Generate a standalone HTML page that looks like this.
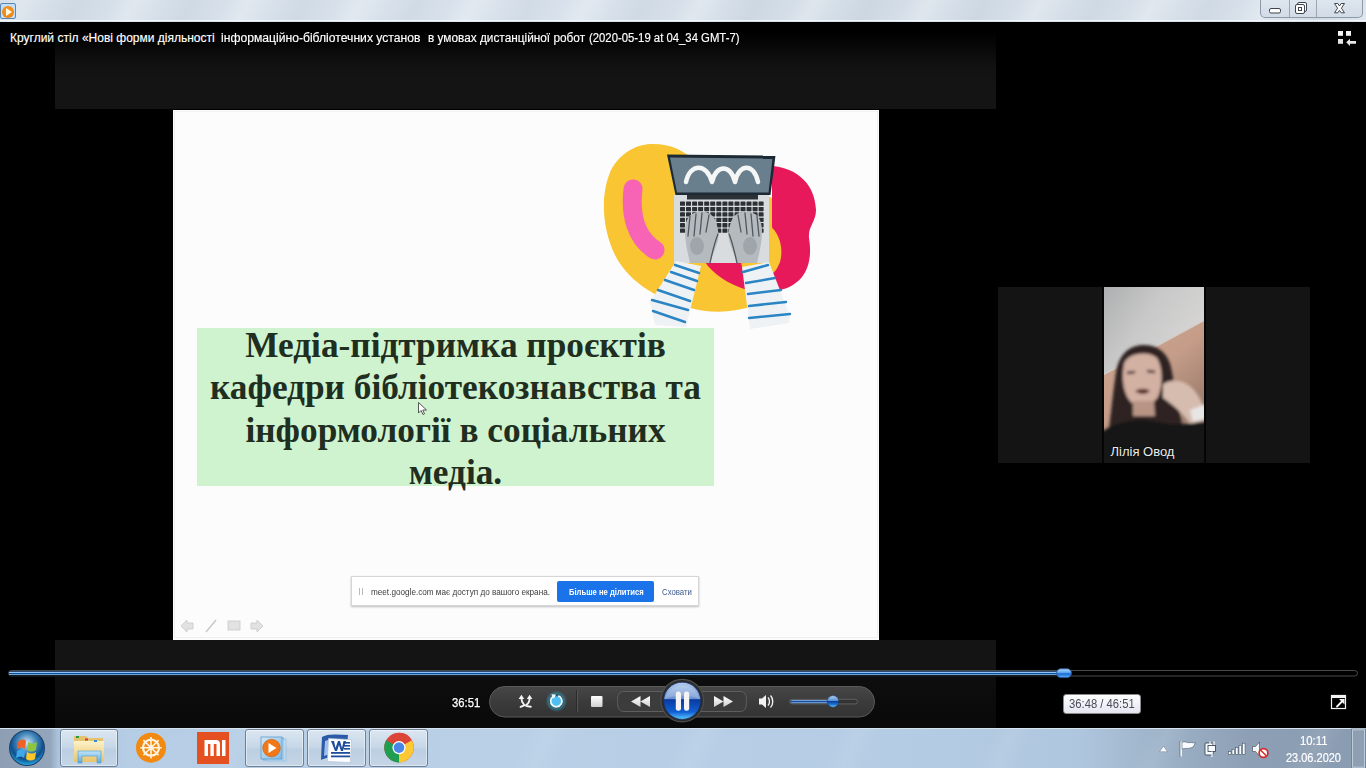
<!DOCTYPE html>
<html><head><meta charset="utf-8">
<style>
*{box-sizing:border-box;margin:0;padding:0}
html,body{width:1366px;height:768px;overflow:hidden;background:#000;font-family:"Liberation Sans",sans-serif}
.abs{position:absolute}
#titlebar{left:0;top:0;width:1366px;height:22px;background:repeating-linear-gradient(118deg,rgba(255,255,255,0) 0px,rgba(255,255,255,.25) 20px,rgba(255,255,255,0) 45px,rgba(120,140,160,.08) 70px,rgba(255,255,255,0) 100px),linear-gradient(90deg,#d5dfe9 0%,#d9e2ec 40%,#d3dde7 60%,#d9e2eb 100%)}
#titlebar:after{content:"";position:absolute;left:0;top:20px;width:1366px;height:1px;background:#f4f7fa}
#appicon{left:0;top:3px;width:16px;height:16px;border:1px solid #5a86b0;border-radius:2px;background:#bfe0f8}
#appicon i{position:absolute;left:1px;top:1.5px;width:12px;height:12px;border-radius:50%;background:radial-gradient(circle at 50% 40%,#ff9a20,#e87808)}
#appicon b{position:absolute;left:5px;top:3.5px;width:0;height:0;border-left:6px solid #fffbe8;border-top:4.5px solid transparent;border-bottom:4.5px solid transparent}
#capbtns{left:1260px;top:-2px;width:103px;height:20px;border:1px solid #8d99a6;border-top:none;border-radius:0 0 5px 5px;background:linear-gradient(#dfe7ef,#d2dce6)}
#capbtns .d{position:absolute;top:0;width:1px;height:19px;background:#9aa6b2}
#video{left:0;top:22px;width:1366px;height:706px;background:#000}
#vtop{left:55px;top:22px;width:941px;height:86.5px;background:linear-gradient(#000 0px,#000 10px,#050505 20px,#0c0c0c 32px,#121212 46px,#141414 62px,#141414 86px)}
#vbot{left:55px;top:640px;width:941px;height:88px;background:linear-gradient(#141414 0px,#141414 30px,#0e0e0e 36px,#0c0c0c 55px,#090909 88px)}
#slide{left:173px;top:110px;width:706px;height:530px;background:#fcfcfc}
#title{left:10px;top:31px;color:#fff;font-size:12px;white-space:pre;line-height:14px;-webkit-text-stroke:0.15px #fff}
#title span{position:absolute;top:0;transform-origin:0 0}
#webcam{left:998px;top:287px;width:312px;height:176px;background:#141414}
#cam{left:1104px;top:287px;width:100px;height:176px;background:#888}
#taskbar{left:0;top:728px;width:1366px;height:40px;background:linear-gradient(90deg,#8e9fb3 0px,#93a5ba 50px,#aac3dc 58px,#b5cde5 130px,#b9d0e7 500px,#b4cce4 900px,#aec6de 1080px,#9db2c8 1160px,#8d9fb4 1250px,#8a9cb1 1366px)}
#taskbar:before{content:"";position:absolute;left:0;top:0;width:1366px;height:1px;background:#d6e2ee}
#taskbar:after{content:"";position:absolute;left:0;top:0;width:1366px;height:40px;background:repeating-linear-gradient(115deg,rgba(255,255,255,0) 0px,rgba(255,255,255,0) 60px,rgba(255,255,255,.08) 80px,rgba(255,255,255,0) 100px,rgba(255,255,255,0) 140px)}
.tbtn{position:absolute;top:729px;height:38px;border:1px solid #6f8096;border-radius:3px;background:linear-gradient(#dbe6f1,#c8d8e8 45%,#bccfe2 55%,#c4d5e6);box-shadow:inset 0 0 0 1px rgba(255,255,255,.45)}
#green{left:197px;top:328px;width:517px;height:158px;background:#cff3cf}
#stext{left:197px;top:328px;width:517px;text-align:center;font:bold 35.3px/42.4px "Liberation Serif",serif;color:#1f2e1f}
#meetbar{left:351px;top:576px;width:348px;height:30px;background:#fff;border:1px solid #d6d6d6;box-shadow:0 1px 2px rgba(0,0,0,.25)}
#meetbar .grip{position:absolute;left:7px;top:11px;width:4px;height:7px;border-left:1px solid #bbb;border-right:1px solid #bbb}
#meetbar .t{position:absolute;left:18.5px;top:9px;font-size:9.5px;line-height:12px;color:#3c3c3c;white-space:nowrap;transform-origin:0 0;transform:scaleX(0.859)}
#meetbar .btn{position:absolute;left:205px;top:4px;width:97px;height:21px;background:#1a73e8;border-radius:2px}
#meetbar .bt{position:absolute;left:216.5px;top:9px;font-size:9px;line-height:12px;font-weight:bold;color:#fff;white-space:nowrap;transform-origin:0 0;transform:scaleX(0.85)}
#meetbar .hide{position:absolute;left:309.5px;top:9px;font-size:9.5px;line-height:12px;color:#3d5a8c;white-space:nowrap;transform-origin:0 0;transform:scaleX(0.82)}

.lbl{position:absolute;white-space:nowrap;transform-origin:0 0}
#ttip{left:1063px;top:694px;width:78px;height:20px;border:1px solid #8a8a8a;border-radius:3px;background:linear-gradient(#ffffff,#e4e5f0)}
</style></head><body>
<div id="titlebar" class="abs"></div>
<div id="appicon" class="abs"><i></i><b></b></div>
<div id="capbtns" class="abs"><div class="d" style="left:28px"></div><div class="d" style="left:55px"></div></div>
<svg class="abs" style="left:1260px;top:0" width="106" height="22" viewBox="1260 0 106 22">
<rect x="1269.5" y="8.5" width="11" height="4.5" rx="1.5" fill="#fff" stroke="#3f4650" stroke-width="1"/>
<rect x="1297.5" y="2.5" width="9" height="9" rx="1.5" fill="#fff" stroke="#3f4650" stroke-width="1"/>
<rect x="1295.5" y="4.5" width="9" height="9" rx="1.5" fill="#fff" stroke="#3f4650" stroke-width="1"/>
<rect x="1298.5" y="7.5" width="3" height="3" fill="#fff" stroke="#3f4650" stroke-width="1"/>
<path d="M1334.5,3.5 L1337.8,3.5 L1339.5,6 L1341.2,3.5 L1344.5,3.5 L1341.4,8.2 L1344.5,12.8 L1341.2,12.8 L1339.5,10.3 L1337.8,12.8 L1334.5,12.8 L1337.6,8.2 Z" fill="#fff" stroke="#3f4650" stroke-width="1" stroke-linejoin="round"/>
</svg>
<div id="vtop" class="abs"></div>
<div id="vbot" class="abs"></div>
<div id="slide" class="abs"></div>
<div class="abs" style="left:174px;top:111px;width:704px;height:527px;border:1px solid #efefef;border-top-color:#f3f3f3"></div>
<svg class="abs" style="left:590px;top:130px" width="240" height="210" viewBox="590 130 240 210">
<path d="M650,144 C668,143 684,150 694,160 L776,200 C792,240 792,285 762,302 C740,313 712,314 690,308 C662,300 630,285 615,255 C602,228 600,195 611,170 C621,152 636,145 650,144 Z" fill="#f9c532"/>
<path d="M772,166 C798,168 815,185 816,210 C816,222 808,226 809,238 C813,262 806,282 784,289 C776,291 772,285 772,280 L772,166 Z" fill="#e8195b"/>
<path d="M769,225 C779,232 784,248 780,262 C777,270 773,274 769,276 Z" fill="#f9c532"/>
<path d="M705,262 L741,262 L747,290 C728,284 713,274 705,262 Z" fill="#e8195b"/>
<path d="M633,189 C630,215 636,238 655,250" stroke="#f763b5" stroke-width="19" stroke-linecap="round" fill="none"/>
<path d="M667,154.5 L775.5,155.5 L770.5,195 L675.5,195 Z" fill="#1c2a33"/>
<path d="M670,157.5 L772.5,158.5 L768.5,192.5 L677,192.5 Z" fill="#6a7f8e"/>
<path d="M686,182 C690,163 707,163 712,182 C716,164 731,164 735,182 C739,163 754,163 758,182" stroke="#f5f6f6" stroke-width="4.5" stroke-linecap="round" stroke-linejoin="round" fill="none"/>
<path d="M674,195 L769,195 L769,263 L674,263 Z" fill="#d8dcdf"/>
<rect x="687" y="195" width="71" height="4.5" fill="#2a3238"/>
<g fill="#2c3136">
<rect x="680.0" y="201.5" width="5" height="4.3" rx="0.6"/>
<rect x="686.0" y="201.5" width="5" height="4.3" rx="0.6"/>
<rect x="692.1" y="201.5" width="5" height="4.3" rx="0.6"/>
<rect x="698.1" y="201.5" width="5" height="4.3" rx="0.6"/>
<rect x="704.2" y="201.5" width="5" height="4.3" rx="0.6"/>
<rect x="710.2" y="201.5" width="5" height="4.3" rx="0.6"/>
<rect x="716.3" y="201.5" width="5" height="4.3" rx="0.6"/>
<rect x="722.4" y="201.5" width="5" height="4.3" rx="0.6"/>
<rect x="728.4" y="201.5" width="5" height="4.3" rx="0.6"/>
<rect x="734.5" y="201.5" width="5" height="4.3" rx="0.6"/>
<rect x="740.5" y="201.5" width="5" height="4.3" rx="0.6"/>
<rect x="746.5" y="201.5" width="5" height="4.3" rx="0.6"/>
<rect x="752.6" y="201.5" width="5" height="4.3" rx="0.6"/>
<rect x="758.6" y="201.5" width="5" height="4.3" rx="0.6"/>
<rect x="680.0" y="206.9" width="5" height="4.3" rx="0.6"/>
<rect x="686.0" y="206.9" width="5" height="4.3" rx="0.6"/>
<rect x="692.1" y="206.9" width="5" height="4.3" rx="0.6"/>
<rect x="698.1" y="206.9" width="5" height="4.3" rx="0.6"/>
<rect x="704.2" y="206.9" width="5" height="4.3" rx="0.6"/>
<rect x="710.2" y="206.9" width="5" height="4.3" rx="0.6"/>
<rect x="716.3" y="206.9" width="5" height="4.3" rx="0.6"/>
<rect x="722.4" y="206.9" width="5" height="4.3" rx="0.6"/>
<rect x="728.4" y="206.9" width="5" height="4.3" rx="0.6"/>
<rect x="734.5" y="206.9" width="5" height="4.3" rx="0.6"/>
<rect x="740.5" y="206.9" width="5" height="4.3" rx="0.6"/>
<rect x="746.5" y="206.9" width="5" height="4.3" rx="0.6"/>
<rect x="752.6" y="206.9" width="5" height="4.3" rx="0.6"/>
<rect x="758.6" y="206.9" width="5" height="4.3" rx="0.6"/>
<rect x="680.0" y="212.3" width="5" height="4.3" rx="0.6"/>
<rect x="686.0" y="212.3" width="5" height="4.3" rx="0.6"/>
<rect x="692.1" y="212.3" width="5" height="4.3" rx="0.6"/>
<rect x="698.1" y="212.3" width="5" height="4.3" rx="0.6"/>
<rect x="704.2" y="212.3" width="5" height="4.3" rx="0.6"/>
<rect x="710.2" y="212.3" width="5" height="4.3" rx="0.6"/>
<rect x="716.3" y="212.3" width="5" height="4.3" rx="0.6"/>
<rect x="722.4" y="212.3" width="5" height="4.3" rx="0.6"/>
<rect x="728.4" y="212.3" width="5" height="4.3" rx="0.6"/>
<rect x="734.5" y="212.3" width="5" height="4.3" rx="0.6"/>
<rect x="740.5" y="212.3" width="5" height="4.3" rx="0.6"/>
<rect x="746.5" y="212.3" width="5" height="4.3" rx="0.6"/>
<rect x="752.6" y="212.3" width="5" height="4.3" rx="0.6"/>
<rect x="758.6" y="212.3" width="5" height="4.3" rx="0.6"/>
<rect x="680.0" y="217.7" width="5" height="4.3" rx="0.6"/>
<rect x="686.0" y="217.7" width="5" height="4.3" rx="0.6"/>
<rect x="692.1" y="217.7" width="5" height="4.3" rx="0.6"/>
<rect x="698.1" y="217.7" width="5" height="4.3" rx="0.6"/>
<rect x="704.2" y="217.7" width="5" height="4.3" rx="0.6"/>
<rect x="710.2" y="217.7" width="5" height="4.3" rx="0.6"/>
<rect x="716.3" y="217.7" width="5" height="4.3" rx="0.6"/>
<rect x="722.4" y="217.7" width="5" height="4.3" rx="0.6"/>
<rect x="728.4" y="217.7" width="5" height="4.3" rx="0.6"/>
<rect x="734.5" y="217.7" width="5" height="4.3" rx="0.6"/>
<rect x="740.5" y="217.7" width="5" height="4.3" rx="0.6"/>
<rect x="746.5" y="217.7" width="5" height="4.3" rx="0.6"/>
<rect x="752.6" y="217.7" width="5" height="4.3" rx="0.6"/>
<rect x="758.6" y="217.7" width="5" height="4.3" rx="0.6"/>
<rect x="680.0" y="223.1" width="5" height="4.3" rx="0.6"/>
<rect x="686.0" y="223.1" width="5" height="4.3" rx="0.6"/>
<rect x="692.1" y="223.1" width="5" height="4.3" rx="0.6"/>
<rect x="698.1" y="223.1" width="5" height="4.3" rx="0.6"/>
<rect x="704.2" y="223.1" width="5" height="4.3" rx="0.6"/>
<rect x="710.2" y="223.1" width="5" height="4.3" rx="0.6"/>
<rect x="716.3" y="223.1" width="5" height="4.3" rx="0.6"/>
<rect x="722.4" y="223.1" width="5" height="4.3" rx="0.6"/>
<rect x="728.4" y="223.1" width="5" height="4.3" rx="0.6"/>
<rect x="734.5" y="223.1" width="5" height="4.3" rx="0.6"/>
<rect x="740.5" y="223.1" width="5" height="4.3" rx="0.6"/>
<rect x="746.5" y="223.1" width="5" height="4.3" rx="0.6"/>
<rect x="752.6" y="223.1" width="5" height="4.3" rx="0.6"/>
<rect x="758.6" y="223.1" width="5" height="4.3" rx="0.6"/>
<rect x="680.0" y="228.5" width="5" height="4.3" rx="0.6"/>
<rect x="686.0" y="228.5" width="5" height="4.3" rx="0.6"/>
<rect x="692.1" y="228.5" width="5" height="4.3" rx="0.6"/>
<rect x="698.1" y="228.5" width="5" height="4.3" rx="0.6"/>
<rect x="704.2" y="228.5" width="5" height="4.3" rx="0.6"/>
<rect x="710.2" y="228.5" width="5" height="4.3" rx="0.6"/>
<rect x="716.3" y="228.5" width="5" height="4.3" rx="0.6"/>
<rect x="722.4" y="228.5" width="5" height="4.3" rx="0.6"/>
<rect x="728.4" y="228.5" width="5" height="4.3" rx="0.6"/>
<rect x="734.5" y="228.5" width="5" height="4.3" rx="0.6"/>
<rect x="740.5" y="228.5" width="5" height="4.3" rx="0.6"/>
<rect x="746.5" y="228.5" width="5" height="4.3" rx="0.6"/>
<rect x="752.6" y="228.5" width="5" height="4.3" rx="0.6"/>
<rect x="758.6" y="228.5" width="5" height="4.3" rx="0.6"/>
</g>
<path d="M685,232 C685,222 688,216 692,214 C696,212 700,211 705,212 C710,213 714,216 716,222 C718,228 719,234 718,240 C716,248 712,256 710,263 L690,263 C688,254 685,242 685,232 Z" fill="#b4babe"/>
<path d="M762,232 C762,222 759,216 755,214 C751,212 747,211 742,212 C737,213 733,216 731,222 C729,228 728,234 729,240 C731,248 735,256 737,263 L757,263 C759,254 762,242 762,232 Z" fill="#b4babe"/>
<g stroke="#50575d" stroke-width="1.3" fill="none" stroke-linecap="round">
<path d="M690,216 L688,236 M696,214 L694,236 M702,213 L700,234 M709,215 L706,232"/>
<path d="M718,234 C714,244 712,254 710,263"/>
<path d="M757,216 L759,236 M751,214 L753,236 M745,213 L747,234 M738,215 L741,232"/>
<path d="M729,234 C733,244 735,254 737,263"/>
</g>
<g fill="#8e959a" opacity="0.55">
<ellipse cx="697" cy="246" rx="7" ry="9"/><ellipse cx="750" cy="246" rx="7" ry="9"/>
</g>
<path d="M676,261 L701,266 L686,327 L655,325 L650,302 Z" fill="#eef2f5"/>
<path d="M742,267 L769,262 L790,316 L789,323 L750,329 Z" fill="#eef2f5"/>
<g stroke="#2b85c5" stroke-width="2.5" fill="none" stroke-linecap="round">
<path d="M675,265 L699,273 M671,272 L697,281 M665,280 L694,290 M658,290 L690,301 M652,300 L688,310 M653,311 L685,322"/>
<path d="M743,272 L768,265 M746,283 L775,278 M748,294 L781,290 M749,306 L786,302 M749,318 L790,314"/>
</g>
</svg>
<div id="green" class="abs"></div>
<div id="stext" class="abs" style="top:325px">Медіа-підтримка проєктів<br>кафедри бібліотекознавства та<br>інформології в соціальних<br>медіа.</div>
<div id="title" class="abs"><span style="left:0">Круглий стіл «Нові форми діяльності</span><span style="left:210.5px;transform:scaleX(1.012)">інформаційно-бібліотечних установ</span><span style="left:418px;transform:scaleX(0.985)">в умовах дистанційної робот</span><span style="left:579px;transform:scaleX(0.944)">(2020-05-19 at 04_34 GMT-7)</span></div>
<div id="meetbar" class="abs"><div class="grip"></div><div class="t">meet.google.com має доступ до вашого екрана.</div><div class="btn"></div><div class="bt">Більше не ділитися</div><div class="hide">Сховати</div></div>
<svg class="abs" style="left:175px;top:615px" width="95" height="22" viewBox="175 615 95 22">
<g fill="#e2e2e2" stroke="#c8c8c8" stroke-width="0.8">
<path d="M181,626 L187,620 L187,623 L193,623 L193,629 L187,629 L187,632 Z"/>
<path d="M206,632 L216,620" stroke-width="1.4"/>
<rect x="228" y="621" width="12" height="9"/>
<path d="M263,626 L257,620 L257,623 L251,623 L251,629 L257,629 L257,632 Z"/>
</g></svg>
<svg class="abs" style="left:416px;top:400px" width="14" height="18" viewBox="416 400 14 18">
<path d="M418.5,402.5 L418.5,413 L421,410.5 L423,414.5 L424.5,413.8 L422.8,410 L426.5,410 Z" fill="#fff" stroke="#444" stroke-width="0.9" stroke-linejoin="round"/>
</svg>
<div id="webcam" class="abs"></div>
<div class="abs" style="left:1102px;top:287px;width:2px;height:176px;background:#050505"></div>
<div class="abs" style="left:1204px;top:287px;width:2px;height:176px;background:#050505"></div>
<svg class="abs" style="left:1104px;top:287px" width="100" height="176" viewBox="1104 287 100 176">
<defs>
<linearGradient id="ceil" x1="0" y1="0" x2="0.5" y2="0.6"><stop offset="0" stop-color="#aeafb0"/><stop offset="0.5" stop-color="#c8c8c8"/><stop offset="1" stop-color="#d6d5d4"/></linearGradient>
<linearGradient id="wall" x1="0" y1="0" x2="0.6" y2="1"><stop offset="0" stop-color="#cfa893"/><stop offset="0.5" stop-color="#c49c88"/><stop offset="1" stop-color="#8e7264"/></linearGradient>
<filter id="bl" x="-20%" y="-20%" width="140%" height="140%"><feGaussianBlur stdDeviation="1.4"/></filter>
</defs>
<rect x="1104" y="287" width="100" height="176" fill="url(#ceil)"/>
<path d="M1104,375 L1204,321 L1204,463 L1104,463 Z" fill="url(#wall)"/>
<path d="M1104,374.5 L1204,320.5" stroke="#d2cbc4" stroke-width="1.2"/>
<g filter="url(#bl)">
<path d="M1142,345 C1160,344 1170,356 1172,372 C1176,395 1182,425 1190,463 L1104,463 L1106,452 C1110,425 1112,398 1116,372 C1119,355 1128,346 1142,345 Z" fill="#2e2220"/>
<path d="M1124,364 C1127,353 1148,350 1157,358 C1163,368 1163,385 1158,397 C1152,406 1140,408 1132,403 C1124,396 1121,380 1124,364 Z" fill="#d2b0a2"/>
<path d="M1133,401 L1154,401 L1155,416 L1133,416 Z" fill="#b89484"/>
<path d="M1163,384 C1172,378 1186,380 1194,390 C1202,400 1206,410 1206,422 L1190,424 C1182,412 1172,404 1163,398 Z" fill="#d6bcaf"/>
<path d="M1190,410 L1206,404 L1206,418 L1193,422 Z" fill="#e8e6e4"/>
<path d="M1098,434 C1118,420 1138,418 1158,422 C1176,426 1192,424 1210,420 L1210,470 L1098,470 Z" fill="#121212"/>
<path d="M1127,373 L1135,372 M1147,371 L1155,372" stroke="#3a2824" stroke-width="2.4" fill="none"/>
<path d="M1135,391 C1140,388 1146,388 1150,391 C1146,395 1140,395 1135,391 Z" fill="#5a2e2c"/>
</g>
</svg>
<svg class="abs" style="left:0;top:22px" width="1366" height="706" viewBox="0 22 1366 706">
<defs>
<linearGradient id="pillg" x1="0" y1="0" x2="0" y2="1"><stop offset="0" stop-color="#474747"/><stop offset="0.5" stop-color="#3b3b3b"/><stop offset="1" stop-color="#333"/></linearGradient>
<radialGradient id="playg" cx="0.5" cy="0.3" r="0.75"><stop offset="0" stop-color="#9ec8f4"/><stop offset="0.42" stop-color="#4d8fda"/><stop offset="0.5" stop-color="#0a45b0"/><stop offset="0.85" stop-color="#0b5fd6"/><stop offset="1" stop-color="#3aa0f5"/></radialGradient>
<linearGradient id="playg2" x1="0" y1="0" x2="0" y2="1"><stop offset="0" stop-color="#b4cdf0"/><stop offset="0.44" stop-color="#6b92d0"/><stop offset="0.47" stop-color="#0a3aa0"/><stop offset="0.8" stop-color="#1060d4"/><stop offset="1" stop-color="#5ccbff"/></linearGradient>
<linearGradient id="thumbg" x1="0" y1="0" x2="0" y2="1"><stop offset="0" stop-color="#b6dcff"/><stop offset="0.5" stop-color="#4b9cf0"/><stop offset="0.55" stop-color="#1766d0"/><stop offset="1" stop-color="#5fb2ff"/></linearGradient>
<linearGradient id="volthumb" x1="0" y1="0" x2="0" y2="1"><stop offset="0" stop-color="#b0d4f8"/><stop offset="0.42" stop-color="#6096d6"/><stop offset="0.5" stop-color="#0b3d9a"/><stop offset="0.8" stop-color="#1f80e0"/><stop offset="1" stop-color="#80d8ff"/></linearGradient>
<linearGradient id="stopg" x1="0" y1="0" x2="0" y2="1"><stop offset="0" stop-color="#ffffff"/><stop offset="1" stop-color="#cfcfcf"/></linearGradient>
<radialGradient id="glow" cx="0.5" cy="0.5" r="0.5"><stop offset="0.5" stop-color="#40b8d8" stop-opacity="0.85"/><stop offset="1" stop-color="#2a8aa8" stop-opacity="0"/></radialGradient>
</defs>
<!-- seek track -->
<rect x="8.5" y="670.5" width="1349" height="5.5" rx="2.75" fill="#000" stroke="#4a4a4a" stroke-width="1"/>
<rect x="9" y="671" width="1052" height="1" fill="#2c4a70"/>
<rect x="9" y="672" width="1052" height="1" fill="#8fc4f8"/>
<rect x="9" y="673" width="1052" height="1" fill="#0e4c98"/>
<rect x="9" y="674" width="1052" height="1" fill="#6ea4dc"/>
<rect x="9" y="675.5" width="1050" height="1.2" fill="#07101a"/>
<rect x="1056.5" y="668.8" width="15" height="8.8" rx="4.4" fill="url(#thumbg)" stroke="#2a5a9a" stroke-width="0.8"/>
<!-- pill -->
<rect x="489.5" y="686.5" width="385" height="30.5" rx="15.25" fill="url(#pillg)" stroke="#5a5a5a" stroke-width="1"/>
<!-- shuffle -->
<g stroke="#f4f4f4" stroke-width="1.9" fill="none" stroke-linecap="round">
<path d="M521.4,698 C521.4,703 525,706.6 530.8,706.8"/>
<path d="M529.6,698 C529.6,701 528.8,703.2 526.8,704.5"/>
<path d="M524.2,705.4 L520.6,706.8"/>
</g>
<path d="M518.6,699 L521.4,694.8 L524.2,699 Z M526.8,699 L529.6,694.8 L532.4,699 Z" fill="#f4f4f4"/>
<!-- repeat -->
<circle cx="556.3" cy="701.2" r="11" fill="url(#glow)"/>
<circle cx="556.3" cy="701.2" r="7.2" fill="#10303c" opacity="0.6"/>
<circle cx="556.3" cy="701.2" r="5" fill="#4ebff0"/>
<path d="M558.2,695.9 A5.6,5.6 0 1 1 553.1,696.6" stroke="#f2f8ff" stroke-width="1.8" fill="none"/>
<path d="M556,694.4 L551.3,694.3 L553.8,698.8 Z" fill="#f2f8ff"/>
<!-- separator -->
<line x1="576.5" y1="690" x2="576.5" y2="712" stroke="#2a2a2a" stroke-width="1"/>
<line x1="577.5" y1="690" x2="577.5" y2="712" stroke="#555" stroke-width="1"/>
<!-- stop -->
<rect x="591" y="696" width="11.5" height="11" rx="1" fill="url(#stopg)"/>
<!-- prev / next capsules -->
<path d="M670,691.5 L624,691.5 C619,691.5 617.5,695 617.5,701.5 C617.5,708 619,711.5 624,711.5 L670,711.5" fill="#3c3c3c" stroke="#5e5e5e" stroke-width="1"/>
<path d="M694,691.5 L740,691.5 C745,691.5 746.5,695 746.5,701.5 C746.5,708 745,711.5 740,711.5 L694,711.5" fill="#3c3c3c" stroke="#5e5e5e" stroke-width="1"/>
<path d="M631,701.5 L640.5,696 L640.5,707 Z M640.5,701.5 L650,696 L650,707 Z" fill="url(#stopg)"/>
<path d="M733,701.5 L723.5,696 L723.5,707 Z M723.5,701.5 L714,696 L714,707 Z" fill="url(#stopg)"/>
<!-- play -->
<circle cx="682.2" cy="700.6" r="21.3" fill="#2b2b2b" stroke="#4e4e4e" stroke-width="1.2"/>
<circle cx="682.2" cy="700.8" r="18.6" fill="url(#playg2)" stroke="#1b2f5a" stroke-width="0.8"/>
<path d="M664.5,699.5 C670,696.5 676,695.8 682.2,695.8 C688.4,695.8 694.4,696.5 699.9,699.5 A18.2,18.2 0 0 0 664.5,699.5 Z" fill="#ffffff" opacity="0.18"/>
<rect x="675.8" y="691.6" width="5.2" height="19.2" rx="2.4" fill="#f4f4f4"/>
<rect x="684" y="691.6" width="5.2" height="19.2" rx="2.4" fill="#f4f4f4"/>
<!-- volume icon -->
<path d="M759,698.5 L762,698.5 L766,695 L766,708 L762,704.5 L759,704.5 Z" fill="#f2f2f2"/>
<path d="M768,697.5 C770,699.5 770,703.5 768,705.5" stroke="#f2f2f2" stroke-width="1.4" fill="none"/>
<path d="M770.5,695.5 C773.5,698.5 773.5,704.5 770.5,707.5" stroke="#f2f2f2" stroke-width="1.4" fill="none"/>
<!-- volume track -->
<rect x="789.5" y="699.3" width="68" height="4.6" rx="2.3" fill="#333" stroke="#6a6a6a" stroke-width="0.8"/>
<rect x="790.5" y="700" width="42" height="3.2" rx="1.6" fill="#6d9fd8"/>
<rect x="790.5" y="701.2" width="42" height="0.9" fill="#0c3a8c"/>
<circle cx="833" cy="701.4" r="5.8" fill="url(#volthumb)" stroke="#223a66" stroke-width="0.6"/>
<!-- fullscreen -->
<rect x="1331.5" y="695.5" width="14" height="13" fill="none" stroke="#f4f4f4" stroke-width="1.2"/>
<rect x="1331" y="695" width="15" height="3" fill="#f4f4f4"/>
<path d="M1337,706.5 L1342,701.5" stroke="#f4f4f4" stroke-width="1.8" stroke-linecap="round"/>
<path d="M1339,699 L1344.5,699 L1344.5,704.5 Z" fill="#f4f4f4"/>
<!-- top-right compact icon -->
<rect x="1338" y="31" width="5" height="4.8" fill="#f4f4f4"/>
<rect x="1346" y="31" width="5" height="4.8" fill="#f4f4f4"/>
<rect x="1338" y="39" width="5" height="4.8" fill="#e4e4e4"/>
<path d="M1346.2,42.3 L1350,38.8 L1350,41 L1356,41 L1356,43.8 L1350,43.8 L1350,46 Z" fill="#e8e8e8"/>
</svg>
<div class="lbl" style="left:452px;top:695.5px;font-size:12.5px;color:#fff;transform:scaleX(0.9);-webkit-text-stroke:0.25px #fff">36:51</div>
<div id="ttip" class="abs"></div>
<div class="lbl" style="left:1068.5px;top:697px;font-size:12.5px;color:#4a4a58;transform:scaleX(0.9)">36:48 / 46:51</div>
<div class="lbl" style="left:1110.5px;top:443.5px;font-size:13px;color:#ececec;text-shadow:0 0 2px #000">Лілія Овод</div>
<div id="taskbar" class="abs"></div>
<div class="tbtn" style="left:60px;width:58px"></div>
<div class="tbtn" style="left:245px;width:59px"></div>
<div class="tbtn" style="left:307px;width:59px"></div>
<div class="tbtn" style="left:369px;width:59px"></div>
<svg class="abs" style="left:0;top:728px" width="1366" height="40" viewBox="0 728 1366 40">
<defs>
<radialGradient id="orb" cx="0.5" cy="0.35" r="0.65"><stop offset="0" stop-color="#cfe6f5"/><stop offset="0.45" stop-color="#3f83b8"/><stop offset="0.75" stop-color="#0d4f8c"/><stop offset="1" stop-color="#28a4e0"/></radialGradient>
<linearGradient id="wmpb" x1="0" y1="0" x2="1" y2="1"><stop offset="0" stop-color="#cfe8fa"/><stop offset="1" stop-color="#7fb9e6"/></linearGradient>
<linearGradient id="fold" x1="0" y1="0" x2="0" y2="1"><stop offset="0" stop-color="#fdf2c8"/><stop offset="1" stop-color="#e9c46d"/></linearGradient>
<linearGradient id="shelf" x1="0" y1="0" x2="0" y2="1"><stop offset="0" stop-color="#bfe4fa"/><stop offset="1" stop-color="#5aa9dc"/></linearGradient>
</defs>
<!-- start orb -->
<circle cx="27" cy="748" r="18" fill="#1b3f66"/>
<circle cx="27" cy="748" r="17" fill="url(#orb)"/>
<path d="M18,742 C21,739 24,739 26,741 L25,749 C23,747 20,747 17,749 Z" fill="#f0612a"/>
<path d="M28,742 C31,744 34,744 37,742 L36,750 C33,752 30,752 27,750 Z" fill="#8cc63f"/>
<path d="M17,751 C20,749 23,749 25,751 L24,758 C22,756 19,756 16,758 Z" fill="#3ea8ea"/>
<path d="M27,752 C30,754 33,754 36,752 L35,759 C32,761 29,761 26,759 Z" fill="#fcc72a"/>
<!-- explorer folder -->
<path d="M74,736 L86,736 L88,738 L103,738 L104,762 L74,762 Z" fill="#e4c270"/>
<path d="M74,741 L104,741 L104,762 L74,762 Z" fill="url(#fold)"/>
<rect x="76" y="736" width="3" height="2" fill="#2a9a3a"/><rect x="85" y="738.5" width="3" height="2" fill="#c8402a"/><rect x="94" y="740" width="3" height="2" fill="#3a8ad0"/>
<path d="M78,751 L101,751 L101,763 L97,763 L97,756 L82,756 L82,763 L78,763 Z" fill="url(#shelf)" stroke="#4c9bd0" stroke-width="0.6"/>
<!-- orange wheel -->
<circle cx="151" cy="747.7" r="15" fill="#f28a12"/>
<g stroke="#fff3e0" fill="none">
<circle cx="151" cy="747.7" r="8" stroke-width="2.2"/>
<path d="M151,737 L151,758.4 M140.3,747.7 L161.7,747.7 M143.4,740.1 L158.6,755.3 M158.6,740.1 L143.4,755.3" stroke-width="1.6"/>
</g>
<circle cx="151" cy="747.7" r="2.5" fill="#fff3e0"/>
<!-- mi -->
<rect x="197" y="732" width="32" height="32" fill="#e4501f"/>
<path d="M204.5,740 L216,740 C219,740 220,741.5 220,744.5 L220,756 L216.5,756 L216.5,744 L213.8,744 L213.8,756 L210.4,756 L210.4,744 L208,744 L208,756 L204.5,756 Z M222,740 L225.5,740 L225.5,756 L222,756 Z" fill="#fff"/>
<!-- wmp -->
<rect x="263.5" y="738" width="20" height="22" fill="#a9d4f2" stroke="#6ea7d3" stroke-width="0.8"/>
<rect x="266" y="739" width="20" height="22" fill="#b8dcf5" stroke="#7ab0d8" stroke-width="0.6" opacity="0.7"/>
<rect x="261" y="737" width="21" height="22" fill="url(#wmpb)" stroke="#5d9bcb" stroke-width="0.8"/>
<circle cx="271.5" cy="748" r="8.8" fill="#f07818" stroke="#d45a08" stroke-width="0.6"/>
<path d="M268.5,743 L276.5,748 L268.5,753 Z" fill="#fff"/>
<!-- word -->
<path d="M322,737 C326,734 336,734 348,735 L346,757 C336,756 326,757 321,760 Z" fill="#2a5aa8"/>
<path d="M325,741 C329,739 336,739 344,739.5 L343,754 C336,753.5 329,754 324,756 Z" fill="#9fc0ea"/>
<rect x="328" y="739" width="23" height="23" fill="#fbfdff" stroke="#b9c6d8" stroke-width="0.7" transform="rotate(3 339 750)"/>
<path d="M331,741 L334,741 L335.5,748 L338,741 L340,741 L342,748 L343.5,741 L346,741 L343,751 L341,751 L339,745 L337,751 L335,751 Z" fill="#1e4c9c"/>
<rect x="344" y="742" width="6" height="1.6" fill="#1e4c9c"/><rect x="344" y="745" width="6" height="1.6" fill="#1e4c9c"/><rect x="344" y="748" width="6" height="1.6" fill="#1e4c9c"/>
<rect x="331" y="752" width="19" height="1.8" fill="#1e4c9c"/><rect x="331" y="755.5" width="19" height="1.8" fill="#1e4c9c"/>
<!-- chrome -->
<circle cx="399" cy="747.6" r="14.8" fill="#db4437"/>
<path d="M399,747.6 L399,732.8 A14.8,14.8 0 0 1 411.8,740.2 Z" fill="#db4437"/>
<path d="M399,747.6 L411.8,740.2 A14.8,14.8 0 0 1 399,762.4 Z" fill="#fcc934"/>
<path d="M399,747.6 L399,762.4 A14.8,14.8 0 0 1 386.2,740.2 Z" fill="#1e9e50"/>
<circle cx="399" cy="747.6" r="6.6" fill="#fff"/>
<circle cx="399" cy="747.6" r="5.3" fill="#4a86e8"/>
<!-- tray -->
<path d="M1159.5,751.7 L1163.5,746.2 L1167.5,751.7 Z" fill="#f8fbff" stroke="#5a6a7a" stroke-width="0.4"/>
<path d="M1181,741.5 L1181,756.5" stroke="#f8fbff" stroke-width="1.8"/>
<path d="M1182,742 C1185,741 1188,743.5 1190.5,742.5 L1195.5,743 L1193,747 C1190,749 1186,748 1182,749 Z" fill="#f8fbff" stroke="#3a4654" stroke-width="0.5"/>
<path d="M1180,741 L1180,757" stroke="#3a4654" stroke-width="0.5"/>
<rect x="1205" y="743" width="8" height="12" rx="1" fill="#f8fbff" stroke="#2e3a48" stroke-width="0.8"/>
<rect x="1208" y="745.5" width="7.5" height="6" fill="#f8fbff" stroke="#2e3a48" stroke-width="0.8"/>
<path d="M1210,741.5 L1210,745 M1214,741.5 L1214,745 M1212,751.5 L1212,757" stroke="#f8fbff" stroke-width="1.2"/>
<g fill="#f8fbff" stroke="#3a4654" stroke-width="0.5">
<rect x="1228.5" y="751.5" width="2.5" height="2.8"/><rect x="1232" y="749.5" width="2.5" height="4.8"/><rect x="1235.5" y="747.5" width="2.5" height="6.8"/><rect x="1239" y="745.3" width="2.5" height="9"/><rect x="1242.5" y="743.2" width="2.5" height="11.1"/>
</g>
<path d="M1252.5,746.5 L1255.5,746.5 L1259.5,742 L1259.5,756 L1255.5,751.5 L1252.5,751.5 Z" fill="#f4f6f8" stroke="#3a4654" stroke-width="0.6"/>
<circle cx="1263.5" cy="753" r="4.4" fill="#fff" stroke="#d42a2a" stroke-width="1.7"/>
<path d="M1260.5,750 L1266.5,756" stroke="#d42a2a" stroke-width="1.5"/>
<!-- show desktop -->
<rect x="1351.5" y="729" width="14" height="39" fill="#8e9fb3" stroke="#6f7f94" stroke-width="0.8"/>
<rect x="1352.5" y="729.8" width="12" height="37.4" fill="none" stroke="#c4d0dc" stroke-width="0.9"/>
</svg>
<div class="lbl" style="left:1299.5px;top:733.5px;font-size:12.3px;color:#fff;transform:scaleX(0.92);-webkit-text-stroke:0.2px #fff">10:11</div>
<div class="lbl" style="left:1285.5px;top:750.5px;font-size:12.3px;color:#fff;transform:scaleX(0.893);-webkit-text-stroke:0.2px #fff">23.06.2020</div>
</body></html>
